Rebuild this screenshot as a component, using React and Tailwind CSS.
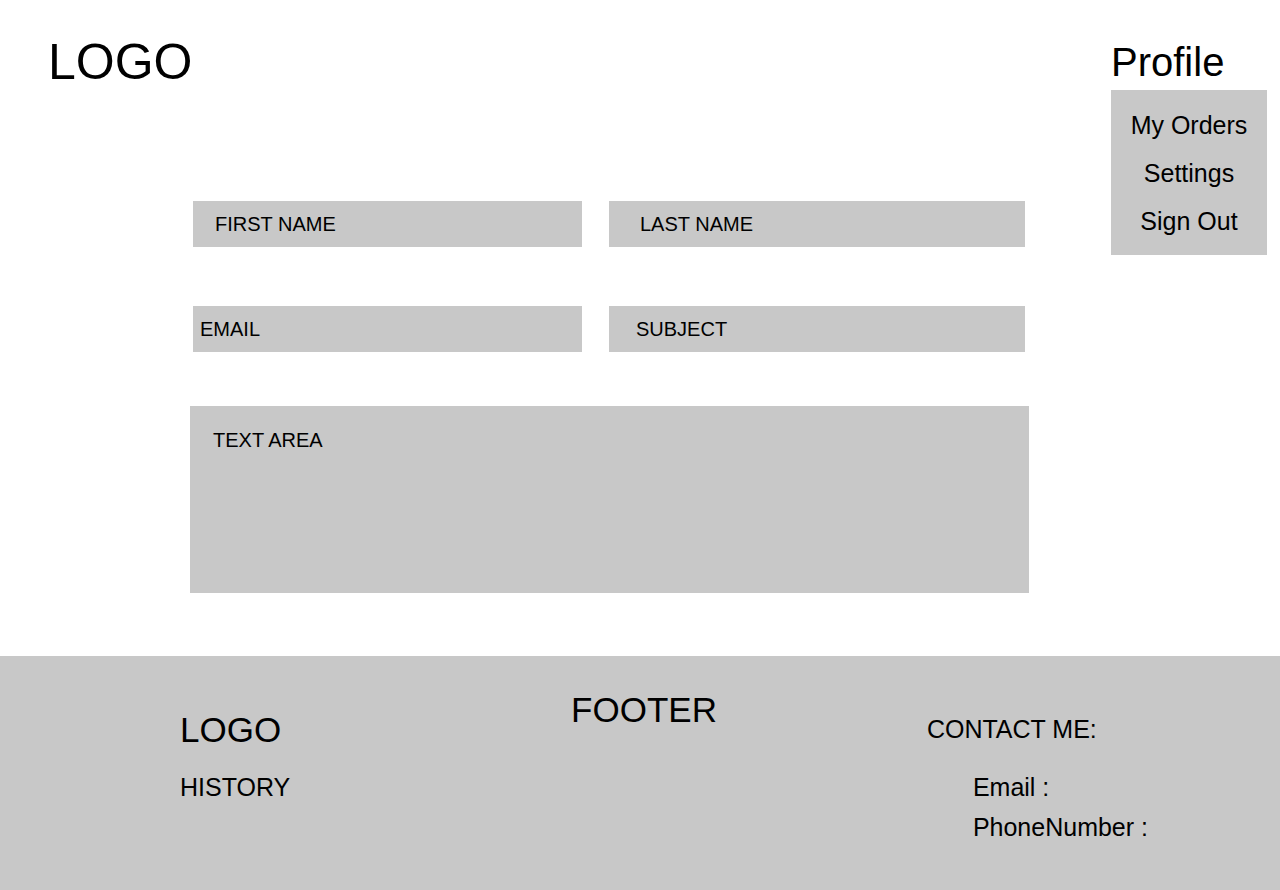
const boxClass =
  "flex w-full min-w-0 cursor-text bg-[#c8c8c8] text-xl focus-within:ring-2 focus-within:ring-black";

function Field({ id, type = "text", label, className }) {
  return (
    <label htmlFor={id} className={`${boxClass} h-[46px] items-center ${className}`}>
      <span className="whitespace-nowrap">{label}</span>
      <input id={id} name={id} type={type} className="ml-3 h-full w-0 min-w-0 grow bg-transparent outline-none" />
    </label>
  );
}

function Header() {
  return (
    <header className="flex items-start justify-between pt-8 pl-12">
      <a href="#home" className="text-[50px] leading-[60px]">LOGO</a>
      <nav aria-label="Profile" className="mr-[13px] h-[169px] w-[156px] pt-1.5">
        <button type="button" className="block h-[52px] pb-1 text-left text-[40px] leading-[48px]">Profile</button>
        <ul className="flex flex-col items-center gap-[18px] bg-[#c8c8c8] pt-5 pb-[19px] text-[25px] leading-[30px]">
          <li><a href="#orders">My Orders</a></li>
          <li><a href="#settings">Settings</a></li>
          <li><a href="#sign-out">Sign Out</a></li>
        </ul>
      </nav>
    </header>
  );
}

function ContactForm() {
  return (
    <form className="mr-[251px] ml-[190px]">
      <div className="mr-1 ml-[3px] grid grid-cols-[389fr_416fr] gap-x-[27px] gap-y-[59px]">
        <Field id="first-name" label="FIRST NAME" className="px-[22px]" />
        <Field id="last-name" label="LAST NAME" className="px-[31px]" />
        <Field id="email" type="email" label="EMAIL" className="px-[7px]" />
        <Field id="subject" label="SUBJECT" className="px-[27px]" />
      </div>
      <label htmlFor="message" className={`${boxClass} mt-[54px] h-[187px] items-start px-[23px] py-5`}>
        <span className="whitespace-nowrap">TEXT AREA</span>
        <textarea id="message" name="message" className="ml-3 h-full w-0 min-w-0 grow resize-none bg-transparent outline-none" />
      </label>
    </form>
  );
}

function Footer() {
  return (
    <footer className="mt-[63px] grid grow grid-cols-[1fr_auto_1fr] items-start bg-[#c8c8c8] pt-[33px] pr-[132px] pb-10 pl-[140px] text-[25px] leading-[30px]">
      <div className="pt-5 pl-10">
        <a href="#home" className="block text-[35px] leading-[42px]">LOGO</a>
        <a href="#history" className="mt-[21px] block">HISTORY</a>
      </div>
      <h2 className="text-[35px] leading-[42px]">FOOTER</h2>
      <address className="justify-self-end pt-[25px] not-italic">
        <h3>CONTACT ME:</h3>
        <div className="mt-7 flex flex-col gap-2.5 pl-[46px]">
          <p>Email :</p>
          <p>PhoneNumber :</p>
        </div>
      </address>
    </footer>
  );
}

export default function App() {
  return (
    <div className="flex min-h-screen flex-col bg-white font-['Liberation_Sans',Arial,sans-serif] text-black">
      <Header />
      <main>
        <ContactForm />
      </main>
      <Footer />
    </div>
  );
}
